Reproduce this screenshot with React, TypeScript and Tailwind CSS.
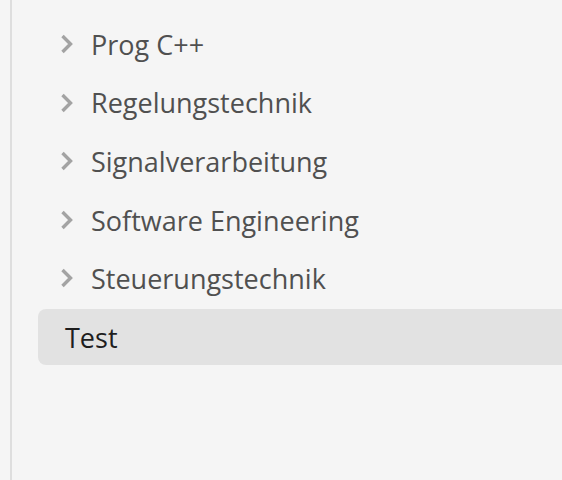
import { useState } from "react";

const folders = [
  "Prog C++",
  "Regelungstechnik",
  "Signalverarbeitung",
  "Software Engineering",
  "Steuerungstechnik",
];

function Chevron() {
  return (
    <svg width="14" height="20" viewBox="0 0 14 20" className="shrink-0">
      <path d="M2.5 2 L10.5 10 L2.5 18" fill="none" stroke="#a3a3a3" strokeWidth="3.4" />
    </svg>
  );
}

export default function App() {
  const [selected, setSelected] = useState("Test");

  return (
    <div
      className="w-[562px] h-[480px] bg-[#f5f5f5] overflow-hidden"
      style={{ fontFamily: "'Open Sans', 'Noto Sans', sans-serif" }}
    >
      <div className="ml-[10px] h-full border-l-2 border-[#dedede] pl-[26px] pt-[16px] flex flex-col gap-[2.6px]">
        {folders.map((name) => (
          <div
            key={name}
            className="h-[56px] flex items-center pl-[22px] gap-[17px] text-[27px] text-[#505050] cursor-pointer"
            onClick={() => setSelected(name)}
          >
            <Chevron />
            <span className="pt-[2px]">{name}</span>
          </div>
        ))}
        <div
          className={`h-[56px] flex items-center pl-[27px] text-[27px] text-[#1e1e1e] rounded-l-lg ${
            selected === "Test" ? "bg-[#e2e2e2]" : ""
          }`}
          onClick={() => setSelected("Test")}
        >
          <span className="pt-[2px]">Test</span>
        </div>
      </div>
    </div>
  );
}
